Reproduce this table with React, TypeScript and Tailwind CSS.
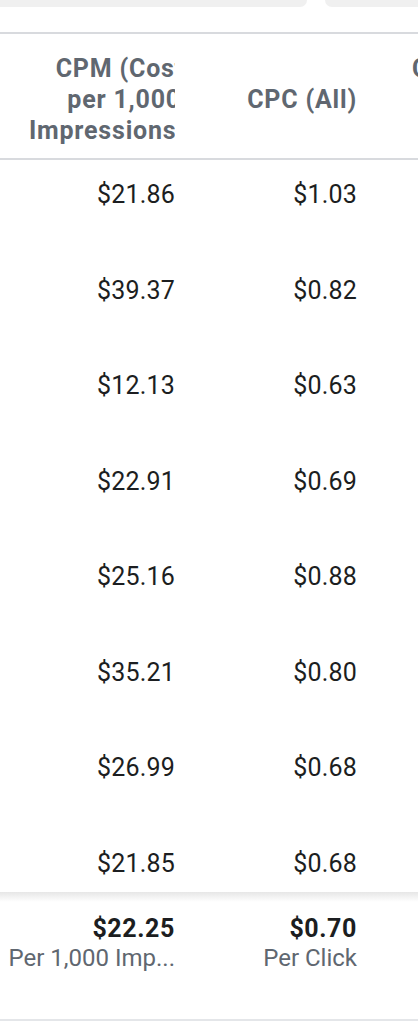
import React from 'react';

const rows = [
  { cpm: '$21.86', cpc: '$1.03' },
  { cpm: '$39.37', cpc: '$0.82' },
  { cpm: '$12.13', cpc: '$0.63' },
  { cpm: '$22.91', cpc: '$0.69' },
  { cpm: '$25.16', cpc: '$0.88' },
  { cpm: '$35.21', cpc: '$0.80' },
  { cpm: '$26.99', cpc: '$0.68' },
  { cpm: '$21.85', cpc: '$0.68' },
];

const App = () => {
  return (
    <div className="w-[418px] h-[1024px] overflow-hidden bg-white font-['Roboto',sans-serif]">
      {/* Tabs peeking at the top */}
      <div className="flex h-[7px] justify-between">
        <div className="w-[307px] bg-[#f0f0f0] rounded-br-[8px]" />
        <div className="w-[93px] bg-[#f0f0f0] rounded-bl-[8px]" />
      </div>

      <div className="h-[25px]" />

      {/* Header */}
      <div className="flex h-[128px] border-y-2 border-[#d8dade] text-[25px] font-bold text-[#606770] leading-[31px] tracking-[0.8px]">
        <div className="w-[175px] shrink-0 overflow-hidden flex justify-end pt-[19px]">
          <div className="flex flex-col items-end shrink-0 w-[200px] mr-[-8px] whitespace-nowrap">
            <span className="mr-[-1px]">CPM (Cost</span>
            <span className="mr-[2px]">per 1,000</span>
            <span className="mr-[-3px]">Impressions)</span>
          </div>
        </div>
        <div className="w-[182px] shrink-0 text-right pt-[50px]">CPC (All)</div>
        <div className="ml-[55px] shrink-0 pt-[19px]">Cost</div>
      </div>

      {/* Body */}
      <div className="h-[732px] overflow-hidden">
        {rows.map((r, i) => (
          <div key={i} className="flex h-[95.5px] pt-[20px] text-[25px] leading-[30px] text-[#1c1e21] tracking-[0.2px]">
            <div className="w-[175px] text-right">{r.cpm}</div>
            <div className="w-[182px] text-right">{r.cpc}</div>
          </div>
        ))}
      </div>

      {/* Summary footer */}
      <div className="relative h-[129px] border-b-2 border-[#e4e6e9] bg-white">
        <div className="absolute inset-x-0 top-0 h-[10px] bg-gradient-to-b from-[#e6e6e6] to-white" />
        <div className="relative flex pt-[22px]">
          <div className="w-[175px] flex flex-col items-end">
            <div className="text-[25px] font-bold text-[#1c1e21] tracking-[0.6px] leading-[30px]">$22.25</div>
            <div className="text-[24px] text-[#606770] leading-[28px] whitespace-nowrap">Per 1,000 Imp...</div>
          </div>
          <div className="w-[182px] flex flex-col items-end">
            <div className="text-[25px] font-bold text-[#1c1e21] tracking-[0.6px] leading-[30px]">$0.70</div>
            <div className="text-[24px] text-[#606770] leading-[28px]">Per Click</div>
          </div>
        </div>
      </div>
    </div>
  );
};

export default App;
